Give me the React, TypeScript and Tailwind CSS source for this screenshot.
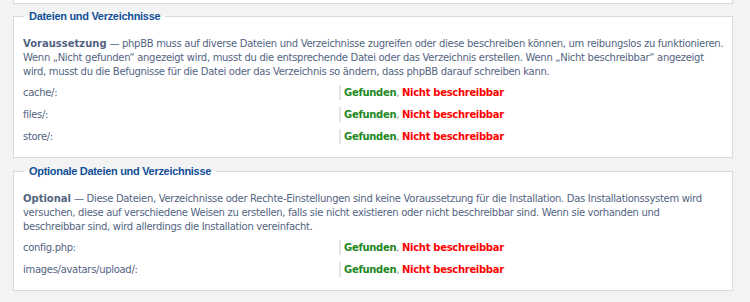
const rows1 = ['cache/:', 'files/:', 'store/:'];
const rows2 = ['config.php:', 'images/avatars/upload/:'];

function Row({ label }: { label: string }) {
	return (
		<div className="flex items-center h-[22px]">
			<div className="w-[316px] shrink-0">{label}</div>
			<div className="border-l-2 border-[#e4e4e4] pl-[3px] leading-[15px] font-bold">
				<span className="text-[#228822]">Gefunden</span>
				<span className="text-[#8f8f8f] font-normal">, </span>
				<span className="text-[#ff0000]">Nicht beschreibbar</span>
			</div>
		</div>
	);
}

function Box({ title, children, rows, className }: { title: string; children: React.ReactNode; rows: string[]; className: string }) {
	return (
		<fieldset className={`bg-white border border-[#d9d9d9] pl-[9px] pr-[4px] pt-[14px] pb-[10px] ${className}`}>
			<legend
				className="ml-[1px] px-[5px] text-[11px] tracking-[-0.3px] leading-[14px] font-bold text-[#115098]"
				style={{ fontFamily: '"Liberation Sans", Arial, sans-serif' }}
			>
				{title}
			</legend>
			<p className="leading-[14px] mb-[2px] whitespace-nowrap">{children}</p>
			{rows.map((r) => (
				<Row key={r} label={r} />
			))}
		</fieldset>
	);
}

export default function App() {
	return (
		<div
			className="w-[750px] h-[302px] overflow-hidden bg-[#f3f3f3] pl-[13px] pr-[17px] text-[10px] tracking-[-0.3px] text-[#536482]"
			style={{ fontFamily: '"DejaVu Sans", Verdana, sans-serif' }}
		>
			<div className="h-[4px] bg-white border-x border-b border-[#d9d9d9]" />
			<Box title="Dateien und Verzeichnisse" rows={rows1} className="mt-[5px]">
				<strong className="tracking-normal">Voraussetzung</strong> — phpBB muss auf diverse Dateien und Verzeichnisse zugreifen oder diese beschreiben können, um reibungslos zu funktionieren.
				<br />
				Wenn „Nicht gefunden“ angezeigt wird, musst du die entsprechende Datei oder das Verzeichnis erstellen. Wenn „Nicht beschreibbar“ angezeigt
				<br />
				wird, musst du die Befugnisse für die Datei oder das Verzeichnis so ändern, dass phpBB darauf schreiben kann.
			</Box>
			<Box title="Optionale Dateien und Verzeichnisse" rows={rows2} className="mt-[6px]">
				<strong className="tracking-normal">Optional</strong> — Diese Dateien, Verzeichnisse oder Rechte-Einstellungen sind keine Voraussetzung für die Installation. Das Installationssystem wird
				<br />
				versuchen, diese auf verschiedene Weisen zu erstellen, falls sie nicht existieren oder nicht beschreibbar sind. Wenn sie vorhanden und
				<br />
				beschreibbar sind, wird allerdings die Installation vereinfacht.
			</Box>
		</div>
	);
}
